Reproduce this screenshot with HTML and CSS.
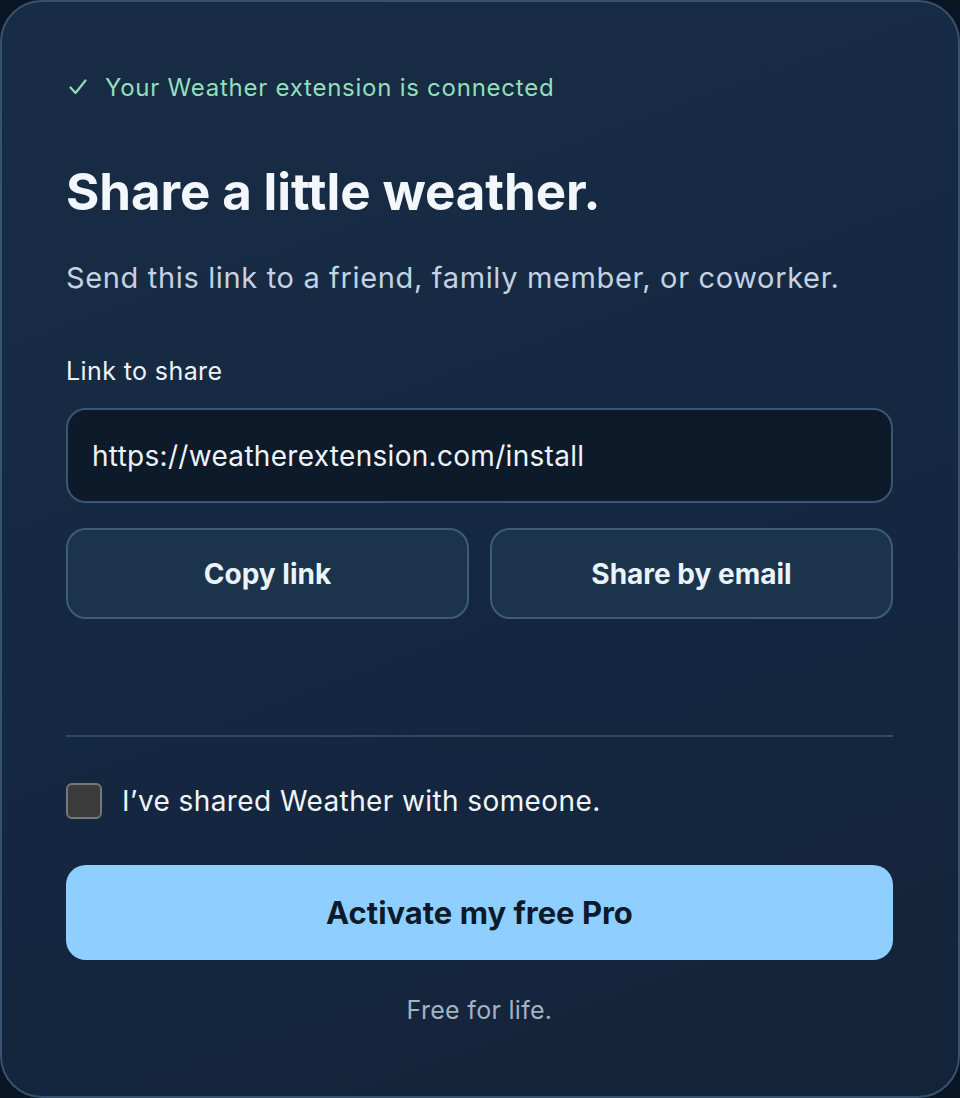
FILE: index.html
```html
<!DOCTYPE html>
<html lang="en">
<head>
  <meta charset="UTF-8">
  <meta name="viewport" content="width=device-width, initial-scale=1">
  <title>Share Weather</title>
  <link rel="stylesheet" href="styles.css">
</head>
<body>
  <!-- Share card -->
  <div class="share-card">
    <div class="status-line">
      <svg class="status-check" viewBox="0 0 20 20" width="20" height="20">
        <path d="M2.5 10.5 L7.5 16 L17.5 3.5" fill="none" stroke="#8fdcb8" stroke-width="2.2" stroke-linecap="round" stroke-linejoin="round"/>
      </svg>
      <span>Your Weather extension is connected</span>
    </div>

    <h1 class="share-title">Share a little weather.</h1>
    <p class="share-subtitle">Send this link to a friend, family member, or coworker.</p>

    <label class="field-label" for="shareLink">Link to share</label>
    <input class="link-input" id="shareLink" type="text" value="https://weatherextension.com/install" readonly>

    <div class="button-row">
      <button type="button" class="ghost-btn">Copy link</button>
      <button type="button" class="ghost-btn">Share by email</button>
    </div>

    <hr class="divider">

    <label class="check-row">
      <span class="check-box"></span>
      <span>I’ve shared Weather with someone.</span>
    </label>

    <button type="button" class="activate-btn">Activate my free Pro</button>
    <p class="footnote">Free for life.</p>
  </div>
</body>
</html>
```

FILE: styles.css
```css
html, body {
  margin: 0;
  height: 100%;
}

body {
  background: #0a1524;
  font-family: Inter, "Noto Sans", "Liberation Sans", sans-serif;
  color: #f1f5f9;
}

.share-card {
  box-sizing: border-box;
  width: 960px;
  height: 1098px;
  border: 2px solid #36526e;
  border-radius: 42px;
  background: linear-gradient(160deg, #182d45 0%, #152841 50%, #13233a 100%);
  padding: 67px 65px 0 64px;
  display: flex;
  flex-direction: column;
}

.status-line {
  display: flex;
  align-items: center;
  gap: 17px;
  height: 36px;
  font-size: 24px;
  letter-spacing: 0.75px;
  color: #93dfbb;
}

.status-check {
  flex: 0 0 auto;
  margin-left: 2px;
}

.share-title {
  margin: 59px 0 0;
  font-size: 51px;
  line-height: 56px;
  font-weight: 700;
  letter-spacing: -0.1px;
  color: #f3f6fa;
}

.share-subtitle {
  margin: 40px 0 0;
  font-size: 29px;
  line-height: 36px;
  letter-spacing: 0.65px;
  color: #c4d2e2;
}

.field-label {
  margin-top: 59px;
  font-size: 25px;
  line-height: 32px;
  letter-spacing: 0.4px;
  color: #eef3f8;
}

.link-input {
  box-sizing: border-box;
  margin-top: 21px;
  width: 100%;
  height: 95px;
  padding: 0 24px;
  background: #0c1a2a;
  border: 2px solid #3a5673;
  border-radius: 20px;
  font-family: inherit;
  font-size: 28px;
  letter-spacing: 0.3px;
  color: #eef3f8;
  outline: none;
}

.button-row {
  margin-top: 25px;
  display: grid;
  grid-template-columns: 1fr 1fr;
  gap: 21px;
}

.ghost-btn {
  height: 91px;
  background: #1b344c;
  border: 2px solid #3e5b78;
  border-radius: 20px;
  font-family: inherit;
  font-size: 28px;
  font-weight: 700;
  color: #eaf2fa;
  cursor: pointer;
}

.divider {
  margin: 116px 0 0;
  border: none;
  height: 2px;
  background: #2f4a66;
}

.check-row {
  margin-top: 46px;
  display: flex;
  align-items: center;
  gap: 20px;
  font-size: 28px;
  letter-spacing: 0.4px;
  color: #f1f5f9;
}

.check-box {
  box-sizing: border-box;
  width: 36px;
  height: 36px;
  border: 2px solid #777;
  border-radius: 6px;
  background: #3b3b3b;
}

.activate-btn {
  margin-top: 46px;
  height: 95px;
  background: #8ecfff;
  border: none;
  border-radius: 20px;
  font-family: inherit;
  font-size: 31px;
  font-weight: 700;
  color: #0c1a2a;
  cursor: pointer;
}

.footnote {
  margin: 34px 0 0;
  text-align: center;
  font-size: 25px;
  line-height: 32px;
  letter-spacing: 0.3px;
  color: #a4b2c2;
}
```
